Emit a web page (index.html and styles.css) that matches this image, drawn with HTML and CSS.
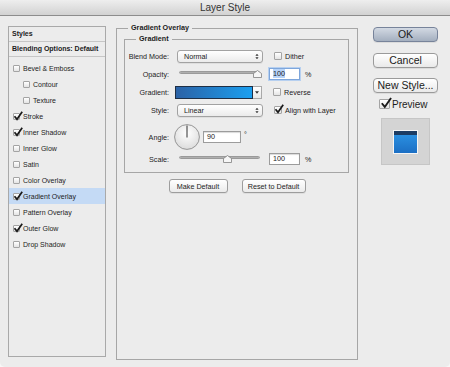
FILE: index.html
```html
<!DOCTYPE html>
<html lang="en">
<head>
    <meta charset="UTF-8">
    <meta name="viewport" content="width=device-width, initial-scale=1.0">
    <title>Layer Style</title>
    <link rel="stylesheet" href="styles.css">
</head>
<body>
    <div class="window">
        <div class="titlebar">Layer Style</div>
        <div class="content">
            <!-- effects list -->
            <div class="styles-list">
                <div class="list-head">Styles</div>
                <div class="list-head">Blending Options: Default</div>
                <ul class="effects">
                    <li><span class="cb"></span>Bevel &amp; Emboss</li>
                    <li class="sub"><span class="cb"></span>Contour</li>
                    <li class="sub"><span class="cb"></span>Texture</li>
                    <li><span class="cb"><svg viewBox="0 0 10 10"><path d="M1.5 5.2 L4 8.3 L9.2 0.8"/></svg></span>Stroke</li>
                    <li><span class="cb"><svg viewBox="0 0 10 10"><path d="M1.5 5.2 L4 8.3 L9.2 0.8"/></svg></span>Inner Shadow</li>
                    <li><span class="cb"></span>Inner Glow</li>
                    <li><span class="cb"></span>Satin</li>
                    <li><span class="cb"></span>Color Overlay</li>
                    <li class="selected"><span class="cb"><svg viewBox="0 0 10 10"><path d="M1.5 5.2 L4 8.3 L9.2 0.8"/></svg></span>Gradient Overlay</li>
                    <li><span class="cb"></span>Pattern Overlay</li>
                    <li><span class="cb"><svg viewBox="0 0 10 10"><path d="M1.5 5.2 L4 8.3 L9.2 0.8"/></svg></span>Outer Glow</li>
                    <li><span class="cb"></span>Drop Shadow</li>
                </ul>
            </div>

            <!-- settings -->
            <fieldset class="panel">
                <legend>Gradient Overlay</legend>
                <fieldset class="group">
                    <legend>Gradient</legend>
                    <div class="row">
                        <label>Blend Mode:</label>
                        <div class="popup">Normal
                            <svg class="arrows" viewBox="0 0 5 8"><path d="M0.5 3 L2.5 0.5 L4.5 3 Z M0.5 5 L2.5 7.5 L4.5 5 Z"/></svg>
                        </div>
                        <span class="check"><span class="cb"></span>Dither</span>
                    </div>
                    <div class="row">
                        <label>Opacity:</label>
                        <div class="slider">
                            <div class="track"></div>
                            <svg class="thumb" style="left: 76px" viewBox="0 0 9 8"><path d="M0.5 3.5 L4.5 0.5 L8.5 3.5 L8.5 7.5 L0.5 7.5 Z"/></svg>
                        </div>
                        <div class="field focused"><span class="sel">100</span></div>
                        <span class="unit">%</span>
                    </div>
                    <div class="row">
                        <label>Gradient:</label>
                        <div class="grad-picker">
                            <div class="grad-swatch"></div>
                            <div class="grad-menu"><svg viewBox="0 0 5 3"><path d="M0 0 L5 0 L2.5 3 Z"/></svg></div>
                        </div>
                        <span class="check"><span class="cb"></span>Reverse</span>
                    </div>
                    <div class="row">
                        <label>Style:</label>
                        <div class="popup">Linear
                            <svg class="arrows" viewBox="0 0 5 8"><path d="M0.5 3 L2.5 0.5 L4.5 3 Z M0.5 5 L2.5 7.5 L4.5 5 Z"/></svg>
                        </div>
                        <span class="check"><span class="cb"><svg viewBox="0 0 10 10"><path d="M1.5 5.2 L4 8.3 L9.2 0.8"/></svg></span>Align with Layer</span>
                    </div>
                    <div class="row angle-row">
                        <label>Angle:</label>
                        <svg class="dial" viewBox="0 0 26 26">
                            <defs>
                                <radialGradient id="dialfill" cx="50%" cy="35%" r="65%">
                                    <stop offset="0" stop-color="#ffffff"/>
                                    <stop offset="1" stop-color="#dcdcdc"/>
                                </radialGradient>
                            </defs>
                            <circle cx="13" cy="13" r="12.4" fill="url(#dialfill)" stroke="#8c8c8c" stroke-width="0.9"/>
                            <line x1="13" y1="13.5" x2="13" y2="1.5" stroke="#2e2e2e" stroke-width="1"/>
                        </svg>
                        <div class="field wide">90</div>
                        <span class="deg">°</span>
                    </div>
                    <div class="row scale-row">
                        <label>Scale:</label>
                        <div class="slider">
                            <div class="track"></div>
                            <svg class="thumb" style="left: 46px" viewBox="0 0 9 8"><path d="M0.5 3.5 L4.5 0.5 L8.5 3.5 L8.5 7.5 L0.5 7.5 Z"/></svg>
                        </div>
                        <div class="field">100</div>
                        <span class="unit">%</span>
                    </div>
                </fieldset>
                <div class="defaults">
                    <button class="small-btn make">Make Default</button>
                    <button class="small-btn reset">Reset to Default</button>
                </div>
            </fieldset>

            <!-- dialog buttons -->
            <div class="actions">
                <button class="btn primary">OK</button>
                <button class="btn">Cancel</button>
                <button class="btn">New Style...</button>
                <div class="preview-check">
                    <span class="cb big"><svg viewBox="0 0 10 10"><path d="M1.5 5.2 L4 8.3 L9.2 0.8"/></svg></span>Preview
                </div>
                <div class="preview">
                    <div class="preview-swatch"></div>
                </div>
            </div>
        </div>
    </div>
</body>
</html>
```

FILE: styles.css
```css
* {
    box-sizing: border-box;
}
body {
    margin: 0;
    background-color: #f7f7f7;
    font-family: 'Liberation Sans', Arial, sans-serif;
    color: #1c1c1c;
}
.window {
    width: 450px;
    height: 367px;
    background-color: #ececec;
    border-radius: 0 0 5px 5px;
    overflow: hidden;
}
.titlebar {
    height: 16px;
    background: linear-gradient(#eeeeee, #d2d2d2);
    border-bottom: 1px solid #8d8d8d;
    text-align: center;
    font-size: 10px;
    line-height: 15px;
    color: #333;
}
.content {
    display: flex;
    align-items: flex-start;
    padding: 10px 0 0 8px;
}

/* left list */
.styles-list {
    width: 98px;
    height: 331px;
    border: 1px solid #a9a9a9;
    font-size: 7px;
    flex-shrink: 0;
}
.list-head {
    height: 15px;
    line-height: 14px;
    padding-left: 3px;
    font-weight: bold;
    border-bottom: 1px solid #c6c6c6;
}
.effects {
    list-style: none;
    margin: 0;
    padding: 3px 0 0 0;
}
.effects li {
    height: 16px;
    display: flex;
    align-items: center;
    padding-left: 4px;
}
.effects li.sub {
    padding-left: 14px;
}
.effects li.selected {
    background-color: #c4daf5;
}
.cb {
    position: relative;
    width: 7px;
    height: 7px;
    border: 1px solid #a4a4a4;
    border-radius: 1px;
    background: linear-gradient(#ffffff, #e4e4e4);
    flex-shrink: 0;
    margin-right: 3px;
}
.cb svg {
    position: absolute;
    left: -1px;
    top: -3px;
    width: 10px;
    height: 10px;
    fill: none;
    stroke: #1a1a1a;
    stroke-width: 1.7;
}

/* main panel */
.panel {
    margin: -3px 0 0 10px;
    padding: 0;
    width: 242px;
    height: 337px;
    min-width: 0;
    border: 1px solid #a6a6a6;
    flex-shrink: 0;
}
.panel legend,
.group legend {
    margin-left: 11px;
    padding: 0 3px;
    font-size: 7.2px;
    line-height: 10px;
    font-weight: bold;
}
.group {
    margin: 1px 0 0 7px;
    padding: 6px 0 0 0;
    width: 225px;
    height: 139px;
    min-width: 0;
    border: 1px solid #a6a6a6;
}
.row {
    display: flex;
    align-items: center;
    height: 12px;
    margin-top: 6px;
    font-size: 7.2px;
}
.row:first-of-type {
    margin-top: 0;
}
.row label {
    width: 44px;
    margin-right: 8px;
    text-align: right;
    flex-shrink: 0;
}
.angle-row {
    height: 26px;
    margin-top: 8px;
}
.scale-row {
    margin-top: 3px;
}
.popup {
    width: 86px;
    height: 13px;
    border: 1px solid #a2a2a2;
    border-radius: 3px;
    background: linear-gradient(#ffffff, #ebebeb);
    box-shadow: 0 1px 0 rgba(0,0,0,0.06);
    display: flex;
    align-items: center;
    justify-content: space-between;
    padding: 0 3px 0 6px;
    flex-shrink: 0;
}
.arrows {
    width: 4px;
    height: 7px;
    fill: #333;
}
.check {
    display: flex;
    align-items: center;
    margin-left: 11px;
}
.check .cb {
    width: 8px;
    height: 8px;
}
.slider {
    position: relative;
    width: 86px;
    height: 12px;
    flex-shrink: 0;
}
.track {
    height: 3px;
    margin: 3px 3px 0 2px;
    border-radius: 2px;
    background: linear-gradient(#8f8f8f, #cfcfcf);
    border: 1px solid #9a9a9a;
}
.thumb {
    position: absolute;
    top: 2px;
    width: 9px;
    height: 8px;
    fill: #f6f6f6;
    stroke: #808080;
    stroke-width: 0.8;
}
.field {
    width: 31px;
    height: 12px;
    margin-left: 6px;
    padding-left: 3px;
    border: 1px solid #9c9c9c;
    background-color: #fff;
    box-shadow: inset 0 1px 1px rgba(0,0,0,0.15);
    line-height: 10px;
    flex-shrink: 0;
}
.field.focused {
    border-color: #7ea6db;
    box-shadow: 0 0 0 1px #b7d0f0;
}
.field .sel {
    background-color: #b6d3f8;
}
.field.wide {
    width: 38px;
    margin-left: 3px;
}
.unit {
    margin-left: 5px;
}
.deg {
    margin-left: 3px;
    align-self: flex-start;
    margin-top: 6px;
}
.grad-picker {
    display: flex;
    width: 87px;
    height: 13px;
    margin-left: -2px;
    flex-shrink: 0;
}
.grad-swatch {
    flex: 1;
    border: 1px solid #1e2f45;
    background: linear-gradient(to right, #2b62a6, #1b9ff0);
}
.grad-menu {
    width: 9px;
    border: 1px solid #a9a9a9;
    border-left: none;
    background: linear-gradient(#ffffff, #e8e8e8);
    display: flex;
    align-items: center;
    justify-content: center;
}
.grad-menu svg {
    width: 4px;
    height: 3px;
    fill: #333;
}
.dial {
    width: 26px;
    height: 26px;
    margin-left: -3px;
    flex-shrink: 0;
}
.defaults {
    display: flex;
    justify-content: center;
    gap: 14px;
    margin-top: 6px;
}
.small-btn {
    height: 14px;
    padding: 0;
    font-family: inherit;
    font-size: 7.2px;
    color: #1c1c1c;
    border: 1px solid #9d9d9d;
    border-radius: 3px;
    background: linear-gradient(#ffffff, #ebebeb);
    box-shadow: 0 1px 0 rgba(0,0,0,0.06);
}
.make {
    width: 59px;
}
.reset {
    width: 64px;
}

/* right column */
.actions {
    width: 65px;
    margin: 1px 0 0 15px;
    display: flex;
    flex-direction: column;
    flex-shrink: 0;
}
.btn {
    height: 15px;
    padding: 0;
    font-family: inherit;
    font-size: 10.5px;
    line-height: 13px;
    color: #1a1a1a;
    border: 1px solid #9a9a9a;
    border-radius: 4px;
    background: linear-gradient(#ffffff, #e9e9e9);
    box-shadow: 0 1px 0 rgba(0,0,0,0.07);
    margin-top: 10px;
}
.btn.primary {
    margin-top: 0;
    border-color: #77839a;
    background: linear-gradient(#d2d9e3, #a4afbf);
}
.btn:nth-child(2) {
    margin-top: 11px;
}
.preview-check {
    display: flex;
    align-items: center;
    height: 12px;
    margin-top: 5px;
    padding-left: 6px;
    font-size: 10px;
}
.cb.big {
    width: 11px;
    height: 10px;
    margin-right: 2px;
}
.cb.big svg {
    left: 0;
    top: -3px;
    width: 12px;
    height: 12px;
    stroke-width: 1.6;
}
.preview {
    width: 49px;
    height: 47px;
    margin: 8px 0 0 8px;
    background-color: #d4d4d4;
    border: 1px solid #c6c6c6;
    display: flex;
    align-items: center;
    justify-content: center;
}
.preview-swatch {
    width: 25px;
    height: 24px;
    border: 1px solid #f5f5f5;
    background: linear-gradient(#1c3c63 0, #1c3c63 4px, #2a8fe0 4px, #1c6fc4 100%);
}
```
